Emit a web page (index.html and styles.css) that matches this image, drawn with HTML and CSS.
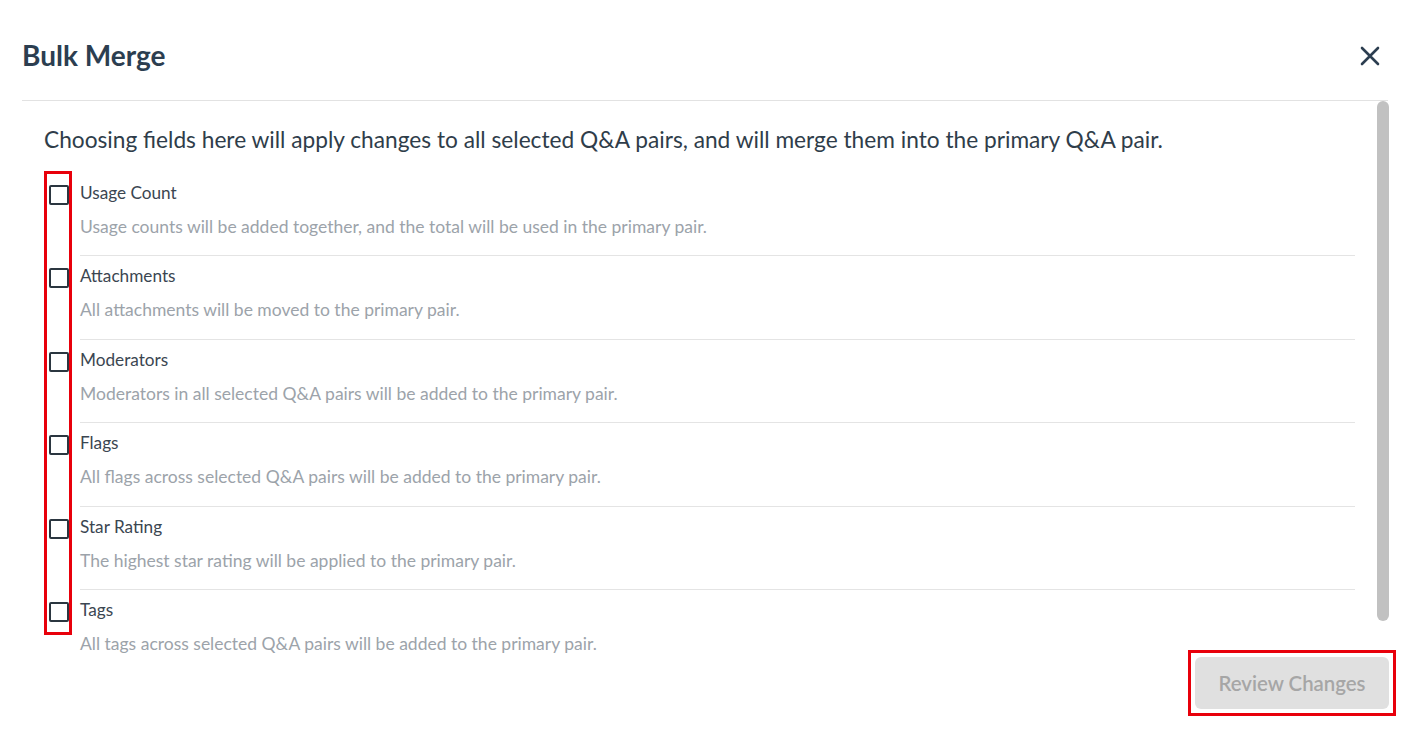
FILE: index.html
```html
<!DOCTYPE html>
<html lang="en">
<head>
<meta charset="utf-8">
<title>Bulk Merge</title>
<link rel="stylesheet" href="styles.css">
</head>
<body>
<div class="modal">
  <header class="modal-header">
    <h1 class="modal-title">Bulk Merge</h1>
    <button class="close-btn" aria-label="Close">
      <svg width="20" height="20" viewBox="0 0 20 20"><path d="M2 2 L18 18 M18 2 L2 18" stroke="#2c3e50" stroke-width="2.6" stroke-linecap="round" fill="none"/></svg>
    </button>
  </header>
  <div class="modal-body">
    <p class="intro">Choosing fields here will apply changes to all selected Q&amp;A pairs, and will merge them into the primary Q&amp;A pair.</p>
    <div class="field-list">
      <div class="field field-first">
        <span class="checkbox"></span>
        <div class="field-text">
          <div class="field-label">Usage Count</div>
          <div class="field-desc">Usage counts will be added together, and the total will be used in the primary pair.</div>
        </div>
      </div>
      <div class="field">
        <span class="checkbox"></span>
        <div class="field-text">
          <div class="field-label">Attachments</div>
          <div class="field-desc">All attachments will be moved to the primary pair.</div>
        </div>
      </div>
      <div class="field">
        <span class="checkbox"></span>
        <div class="field-text">
          <div class="field-label">Moderators</div>
          <div class="field-desc">Moderators in all selected Q&amp;A pairs will be added to the primary pair.</div>
        </div>
      </div>
      <div class="field">
        <span class="checkbox"></span>
        <div class="field-text">
          <div class="field-label">Flags</div>
          <div class="field-desc">All flags across selected Q&amp;A pairs will be added to the primary pair.</div>
        </div>
      </div>
      <div class="field">
        <span class="checkbox"></span>
        <div class="field-text">
          <div class="field-label">Star Rating</div>
          <div class="field-desc">The highest star rating will be applied to the primary pair.</div>
        </div>
      </div>
      <div class="field field-last">
        <span class="checkbox"></span>
        <div class="field-text">
          <div class="field-label">Tags</div>
          <div class="field-desc">All tags across selected Q&amp;A pairs will be added to the primary pair.</div>
        </div>
      </div>
      <div class="highlight-column"></div>
    </div>
    <div class="scroll-thumb"></div>
  </div>
  <footer class="modal-footer">
    <span class="review-highlight">
      <button class="review-btn" disabled>Review Changes</button>
    </span>
  </footer>
</div>
</body>
</html>
```
FILE: styles.css
```css
html, body {
  margin: 0;
  padding: 0;
  background: #ffffff;
}
body {
  font-family: Lato, "Open Sans", sans-serif;
  color: #2f3d4a;
}
.modal {
  width: 1413px;
  height: 735px;
  box-sizing: border-box;
  padding: 0 25px 0 22px;
  display: flex;
  flex-direction: column;
}
.modal-header {
  height: 101px;
  box-sizing: border-box;
  flex: none;
  display: flex;
  align-items: center;
  justify-content: space-between;
  border-bottom: 1px solid #e2e2e2;
  padding: 10px 8px 0 0;
}
.modal-title {
  margin: 0;
  font-size: 28px;
  font-weight: 700;
  color: #2c3e50;
  line-height: 34px;
}
.close-btn {
  border: 0;
  background: none;
  padding: 0;
  width: 20px;
  height: 20px;
  margin-top: 2px;
  cursor: pointer;
}
.close-btn svg {
  display: block;
}
.modal-body {
  position: relative;
  height: 549px;
  flex: none;
  padding: 24px 33px 0 22px;
  box-sizing: border-box;
}
.intro {
  margin: 0;
  font-size: 22.7px;
  line-height: 30px;
  color: #2f3d4a;
}
.field-list {
  position: relative;
  margin-top: 18px;
}
.field {
  display: flex;
  align-items: flex-start;
}
.checkbox {
  flex: none;
  width: 20px;
  height: 20px;
  box-sizing: border-box;
  border: 2px solid #2b3640;
  border-radius: 2px;
  margin: 12px 11px 0 5px;
}
.field-text {
  flex: 1;
  padding: 8px 0 16px;
  border-bottom: 1px solid #e4e4e4;
  height: 83.5px;
  box-sizing: border-box;
}
.field-first .field-text {
  height: 83px;
}
.field-last .field-text {
  border-bottom: 0;
  height: auto;
  padding-bottom: 0;
}
.field-label {
  font-size: 17.2px;
  line-height: 24px;
  color: #3b4651;
}
.field-desc {
  margin-top: 10px;
  font-size: 17.5px;
  line-height: 24px;
  color: #9ca3aa;
}
.highlight-column {
  position: absolute;
  left: 0;
  top: -2px;
  width: 28px;
  height: 464px;
  box-sizing: border-box;
  border: 3px solid #e8000b;
  pointer-events: none;
}
.scroll-thumb {
  position: absolute;
  right: -1px;
  top: 0;
  width: 12px;
  height: 520px;
  border-radius: 6px;
  background: #c1c1c1;
}
.modal-footer {
  flex: none;
  display: flex;
  justify-content: flex-end;
  margin-right: -8px;
}
.review-highlight {
  display: block;
  border: 3px solid #e8000b;
  padding: 4px;
}
.review-btn {
  display: block;
  width: 194px;
  height: 52px;
  border: 0;
  border-radius: 6px;
  background: #e0e0e0;
  color: #a6a6a6;
  font-family: Lato, "Open Sans", sans-serif;
  font-size: 20.4px;
  font-weight: 600;
}
```
